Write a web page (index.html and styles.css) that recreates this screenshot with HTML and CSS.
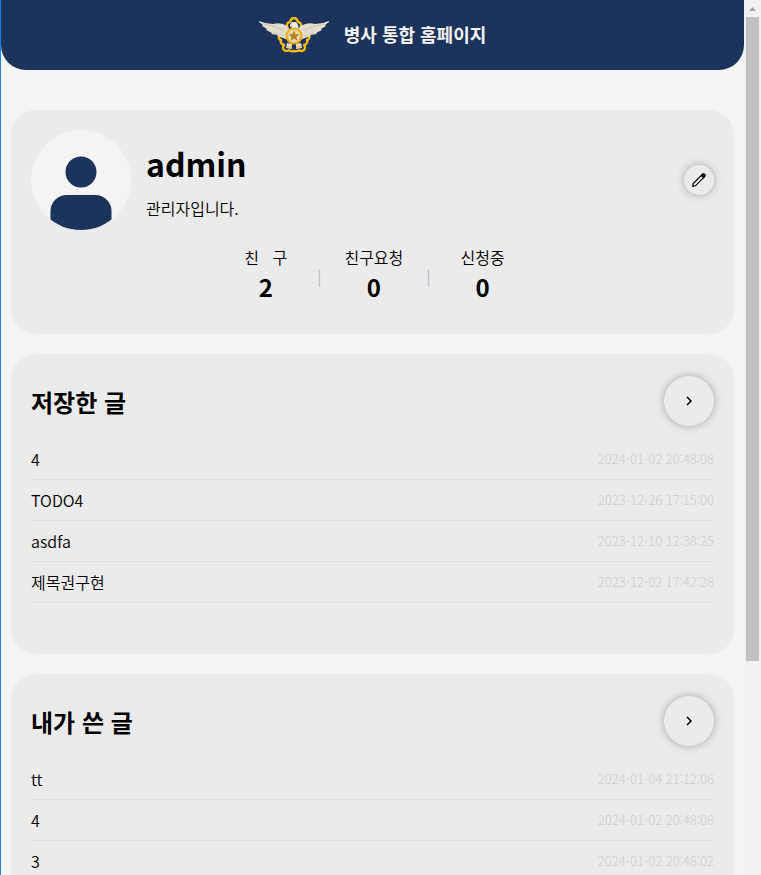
FILE: index.html
```html
<!DOCTYPE html>
<html lang="ko">
<head>
    <meta charset="UTF-8">
    <meta name="viewport" content="width=device-width, initial-scale=1.0">
    <title>병사 통합 홈페이지</title>
    <link rel="stylesheet" href="styles.css">
</head>
<body>

<div class="page">
    <header>
        <svg class="logo" viewBox="0 0 70 36" aria-hidden="true">
            <path fill="none" stroke="#f2b90f" stroke-width="2.400" stroke-linejoin="round" d="M29 12q-3-6 2-7 1-4 4-4t4 4q5 1 2 7M20 19q-1 3 2 4-1 4 3 5-2 3 0 5 3 2 5 0 2 2 5 1 3 1 5-1 2 2 5 0 2-2 0-5 4-1 3-5 3-1 2-4"/>
            <path fill="#e2ddcf" d="M0 4q7 3 14 3 8-2 14 2l4 5-3 9-5-2-6-2 1-1-7-1 1-1-6-3 1-1-5-3 1-1-4-3z"/>
            <path fill="#e2ddcf" d="M70 4q-7 3-14 3-8-2-14 2l-4 5 3 9 5-2 6-2-1-1 7-1-1-1 6-3-1-1 5-3-1-1 4-3z"/>
            <path fill="none" stroke="#c9bd99" stroke-width=".6" d="M5 7q12 2 20 8M14 9q7 1 12 4M14 16q6 0 11 3M65 7q-12 2-20 8M56 9q-7 1-12 4M56 16q-6 0-11 3"/>
            <path fill="#ece7da" d="M31 8l2-3h4l2 3 1 5H31l2-4-2 1z"/>
            <path fill="#e2ddcf" d="M28 26l5 1v5l-6-1zM42 26l-5 1v5l6-1z"/>
            <path fill="#1c335b" d="M34 28h2v4h-2z"/>
            <circle cx="35" cy="19" r="7.500" fill="#e8dcb4" stroke="#e9ac1b" stroke-width="2.200"/>
            <path fill="#b4821f" d="M35 13l1.500 4.200 4.300.1-3.400 2.600 1.200 4.200-3.600-2.500-3.600 2.500 1.200-4.200-3.400-2.600 4.300-.1z"/>
            <path stroke="#d6a32b" stroke-width="1" d="M29 29v2M32 29v2M38 29v2M41 29v2"/>
        </svg>
        <h1>병사 통합 홈페이지</h1>
    </header>

    <main>
        <section class="card">
            <div class="profile">
                <svg class="avatar" viewBox="0 0 100 100" aria-hidden="true">
                    <clipPath id="avatarClip"><circle cx="50" cy="50" r="50"/></clipPath>
                    <g clip-path="url(#avatarClip)">
                        <rect width="100" height="100" fill="#f4f4f4"/>
                        <circle cx="50" cy="42" r="15.500" fill="#1c335b"/>
                        <rect x="19.500" y="65" width="61" height="50" rx="16" fill="#1c335b"/>
                    </g>
                </svg>
                <div class="info">
                    <h2 class="name">admin</h2>
                    <p>관리자입니다.</p>
                </div>
                <button type="button" class="round edit" aria-label="수정">
                    <svg viewBox="0 0 16 16" width="16" height="16" fill="none" stroke="#000" stroke-width="1.200">
                        <path d="M1.700 14.300l.5-2.700 8.500-8.500 2.200 2.200-8.500 8.500z"/>
                        <path fill="#000" d="M10.300 3.500l1.500-1.500q.8-.6 1.600.1l.5.500q.7.800.1 1.600L12.500 5.700z"/>
                    </svg>
                </button>
            </div>
            <div class="stats">
                <div class="stat">친&nbsp;&nbsp;&nbsp;구<strong>2</strong></div>
                <span>|</span>
                <div class="stat requests">친구요청<strong>0</strong></div>
                <span>|</span>
                <div class="stat">신청중<strong>0</strong></div>
            </div>
        </section>

        <section class="card posts">
            <div class="title">
                <h2>저장한 글</h2>
                <button type="button" class="round more" aria-label="저장한 글 더보기">
                    <svg viewBox="0 0 12 12" width="12" height="12" fill="none" stroke="#000" stroke-width="1.500"><path d="M4 2l4 4-4 4"/></svg>
                </button>
            </div>
            <ul>
                <li>4<time>2024-01-02 20:48:08</time></li>
                <li>TODO4<time>2023-12-26 17:15:00</time></li>
                <li>asdfa<time>2023-12-10 12:38:25</time></li>
                <li>제목권구현<time>2023-12-02 17:42:28</time></li>
            </ul>
        </section>

        <section class="card posts">
            <div class="title">
                <h2>내가 쓴 글</h2>
                <button type="button" class="round more" aria-label="내가 쓴 글 더보기">
                    <svg viewBox="0 0 12 12" width="12" height="12" fill="none" stroke="#000" stroke-width="1.500"><path d="M4 2l4 4-4 4"/></svg>
                </button>
            </div>
            <ul>
                <li>tt<time>2024-01-04 21:12:06</time></li>
                <li>4<time>2024-01-02 20:48:08</time></li>
                <li>3<time>2024-01-02 20:48:02</time></li>
            </ul>
        </section>
    </main>
</div>

<div class="scrollbar" aria-hidden="true">
    <svg viewBox="0 0 17 17" width="17" height="17"><path fill="#a3a3a3" d="M5 11l3.500-4 3.500 4z"/></svg>
    <div class="thumb"></div>
</div>

</body>
</html>
```
FILE: styles.css
```css
* { box-sizing: border-box; margin: 0; padding: 0; }
body { display: flex; height: 100vh; overflow: hidden; background: #f4f4f4; border-left: 1px solid #1883d7; color: #000; font-family: "Noto Sans CJK KR", sans-serif; font-size: 16px; font-weight: 350; line-height: 24px; }
.page { flex: 1; min-width: 0; }

header { display: flex; align-items: center; justify-content: center; gap: 15px; height: 70px; background: #1c335b; color: #f4f4f4; border-radius: 0 0 25px 25px; }
.logo { width: 70px; height: 36px; }
h1 { padding-bottom: 3px; font-size: 18px; font-weight: 700; }

main { display: flex; flex-direction: column; gap: 20px; padding: 40px 10px; }
.card { background: #ebebeb; border-radius: 25px; padding: 20px; }

.profile { display: flex; align-items: center; }
.avatar { width: 100px; height: 100px; }
.info { flex: 1; padding-left: 15px; }
.name { font-size: 32px; line-height: 46px; font-weight: 700; }
.info p { padding-top: 10px; }

.round { display: flex; align-items: center; justify-content: center; background: #ebebeb; border: none; border-radius: 50%; box-shadow: 0 0 8px rgba(0, 0, 0, 0.3); cursor: pointer; }
.edit { width: 30px; height: 30px; }
.more { width: 50px; height: 50px; }

.stats { display: flex; justify-content: center; align-items: center; padding: 15px 0 9px 4px; }
.stats span { color: #b4b8c8; }
.stat { margin: 0 30px; text-align: center; }
.requests { margin: 0 23px; }
.stat strong { display: block; font-size: 24px; line-height: 36px; font-weight: 700; }

.posts { min-height: 300px; }
.title { display: flex; align-items: center; justify-content: space-between; height: 54px; margin-bottom: 11px; }
.title h2 { padding-top: 2px; font-size: 24px; font-weight: 700; }
ul { list-style: none; }
li { display: flex; align-items: center; justify-content: space-between; height: 41px; border-bottom: 1px solid #e0e0e0; }
time { color: #cecece; font-size: 13px; font-weight: 300; }

.scrollbar { display: grid; grid-template-rows: 17px 3fr 1fr; width: 17px; background: #f1f1f1; }
.thumb { margin: 0 2px; background: #c1c1c1; }
```
